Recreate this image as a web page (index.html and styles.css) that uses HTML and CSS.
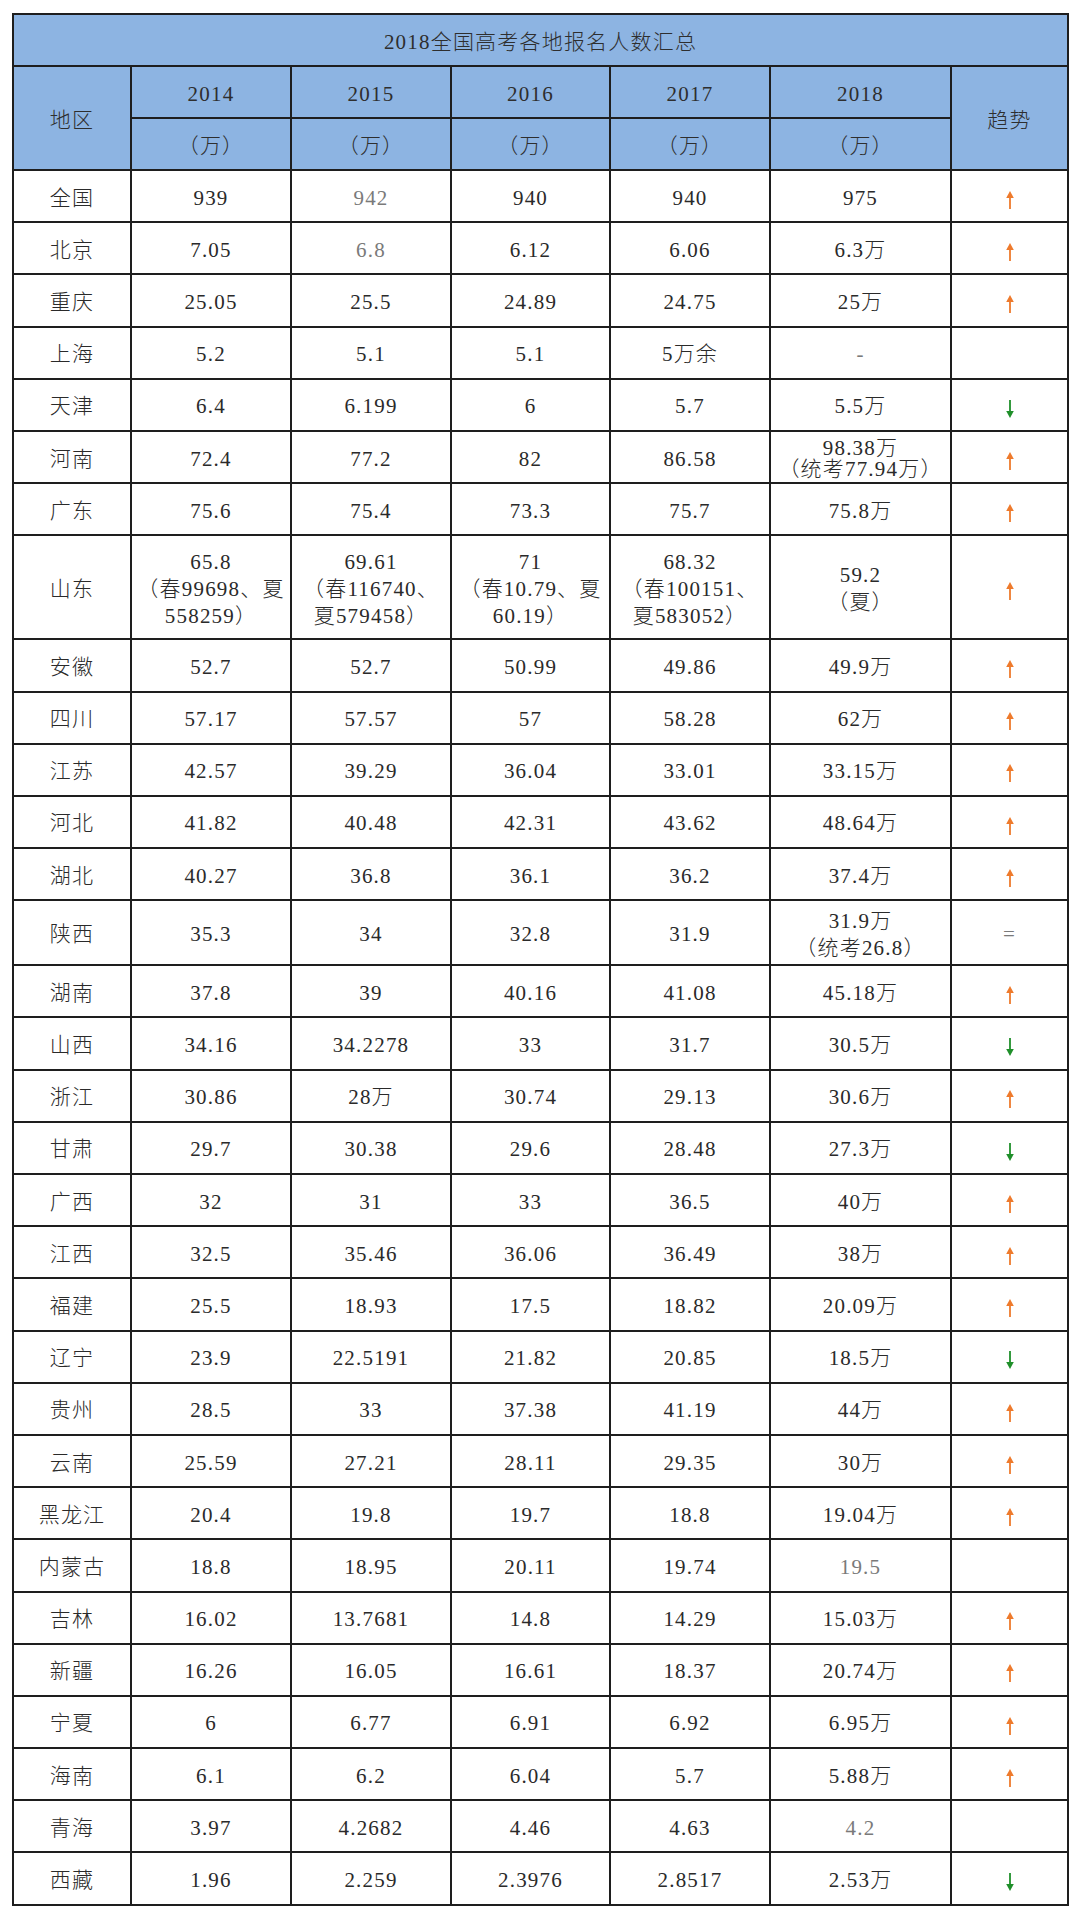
FILE: index.html
```html
<!DOCTYPE html>
<html lang="zh-CN">
<head>
<meta charset="utf-8">
<title>2018全国高考各地报名人数汇总</title>
<link rel="stylesheet" href="styles.css">
</head>
<body>
<svg class="defs" aria-hidden="true">
  <symbol id="arr-up" viewBox="0 0 8 18">
    <path d="M4 5V18" stroke="currentColor" stroke-width="1.8" fill="none"/>
    <path d="M4 0L7.8 7H0.2Z" fill="currentColor"/>
  </symbol>
  <symbol id="arr-down" viewBox="0 0 8 18">
    <path d="M4 0V13" stroke="currentColor" stroke-width="1.8" fill="none"/>
    <path d="M4 18L7.8 11H0.2Z" fill="currentColor"/>
  </symbol>
</svg>
<div class="page">
<table class="sheet">
  <colgroup>
    <col class="c-region"><col class="c-year"><col class="c-year"><col class="c-year16"><col class="c-year"><col class="c-year18"><col class="c-trend">
  </colgroup>
  <thead>
    <tr><th colspan="7">2018全国高考各地报名人数汇总</th></tr>
    <tr><th rowspan="2">地区</th><th>2014</th><th>2015</th><th>2016</th><th>2017</th><th>2018</th><th rowspan="2">趋势</th></tr>
    <tr><th>（万）</th><th>（万）</th><th>（万）</th><th>（万）</th><th>（万）</th></tr>
  </thead>
  <tbody>
    <tr><td>全国</td><td>939</td><td class="muted">942</td><td>940</td><td>940</td><td>975</td><td><svg class="arrow up"><use href="#arr-up"/></svg></td></tr>
    <tr><td>北京</td><td>7.05</td><td class="muted">6.8</td><td>6.12</td><td>6.06</td><td>6.3万</td><td><svg class="arrow up"><use href="#arr-up"/></svg></td></tr>
    <tr><td>重庆</td><td>25.05</td><td>25.5</td><td>24.89</td><td>24.75</td><td>25万</td><td><svg class="arrow up"><use href="#arr-up"/></svg></td></tr>
    <tr><td>上海</td><td>5.2</td><td>5.1</td><td>5.1</td><td>5万余</td><td class="muted">-</td><td></td></tr>
    <tr><td>天津</td><td>6.4</td><td>6.199</td><td>6</td><td>5.7</td><td>5.5万</td><td><svg class="arrow down"><use href="#arr-down"/></svg></td></tr>
    <tr><td>河南</td><td>72.4</td><td>77.2</td><td>82</td><td>86.58</td><td class="tight">98.38万<br>（统考77.94万）</td><td><svg class="arrow up"><use href="#arr-up"/></svg></td></tr>
    <tr><td>广东</td><td>75.6</td><td>75.4</td><td>73.3</td><td>75.7</td><td>75.8万</td><td><svg class="arrow up"><use href="#arr-up"/></svg></td></tr>
    <tr class="tall"><td>山东</td><td>65.8<br>（春99698、夏<br>558259）</td><td>69.61<br>（春116740、<br>夏579458）</td><td>71<br>（春10.79、夏<br>60.19）</td><td>68.32<br>（春100151、<br>夏583052）</td><td>59.2<br>（夏）</td><td><svg class="arrow up"><use href="#arr-up"/></svg></td></tr>
    <tr><td>安徽</td><td>52.7</td><td>52.7</td><td>50.99</td><td>49.86</td><td>49.9万</td><td><svg class="arrow up"><use href="#arr-up"/></svg></td></tr>
    <tr><td>四川</td><td>57.17</td><td>57.57</td><td>57</td><td>58.28</td><td>62万</td><td><svg class="arrow up"><use href="#arr-up"/></svg></td></tr>
    <tr><td>江苏</td><td>42.57</td><td>39.29</td><td>36.04</td><td>33.01</td><td>33.15万</td><td><svg class="arrow up"><use href="#arr-up"/></svg></td></tr>
    <tr><td>河北</td><td>41.82</td><td>40.48</td><td>42.31</td><td>43.62</td><td>48.64万</td><td><svg class="arrow up"><use href="#arr-up"/></svg></td></tr>
    <tr><td>湖北</td><td>40.27</td><td>36.8</td><td>36.1</td><td>36.2</td><td>37.4万</td><td><svg class="arrow up"><use href="#arr-up"/></svg></td></tr>
    <tr class="mid"><td>陕西</td><td>35.3</td><td>34</td><td>32.8</td><td>31.9</td><td>31.9万<br>（统考26.8）</td><td class="muted">=</td></tr>
    <tr><td>湖南</td><td>37.8</td><td>39</td><td>40.16</td><td>41.08</td><td>45.18万</td><td><svg class="arrow up"><use href="#arr-up"/></svg></td></tr>
    <tr><td>山西</td><td>34.16</td><td>34.2278</td><td>33</td><td>31.7</td><td>30.5万</td><td><svg class="arrow down"><use href="#arr-down"/></svg></td></tr>
    <tr><td>浙江</td><td>30.86</td><td>28万</td><td>30.74</td><td>29.13</td><td>30.6万</td><td><svg class="arrow up"><use href="#arr-up"/></svg></td></tr>
    <tr><td>甘肃</td><td>29.7</td><td>30.38</td><td>29.6</td><td>28.48</td><td>27.3万</td><td><svg class="arrow down"><use href="#arr-down"/></svg></td></tr>
    <tr><td>广西</td><td>32</td><td>31</td><td>33</td><td>36.5</td><td>40万</td><td><svg class="arrow up"><use href="#arr-up"/></svg></td></tr>
    <tr><td>江西</td><td>32.5</td><td>35.46</td><td>36.06</td><td>36.49</td><td>38万</td><td><svg class="arrow up"><use href="#arr-up"/></svg></td></tr>
    <tr><td>福建</td><td>25.5</td><td>18.93</td><td>17.5</td><td>18.82</td><td>20.09万</td><td><svg class="arrow up"><use href="#arr-up"/></svg></td></tr>
    <tr><td>辽宁</td><td>23.9</td><td>22.5191</td><td>21.82</td><td>20.85</td><td>18.5万</td><td><svg class="arrow down"><use href="#arr-down"/></svg></td></tr>
    <tr><td>贵州</td><td>28.5</td><td>33</td><td>37.38</td><td>41.19</td><td>44万</td><td><svg class="arrow up"><use href="#arr-up"/></svg></td></tr>
    <tr><td>云南</td><td>25.59</td><td>27.21</td><td>28.11</td><td>29.35</td><td>30万</td><td><svg class="arrow up"><use href="#arr-up"/></svg></td></tr>
    <tr><td>黑龙江</td><td>20.4</td><td>19.8</td><td>19.7</td><td>18.8</td><td>19.04万</td><td><svg class="arrow up"><use href="#arr-up"/></svg></td></tr>
    <tr><td>内蒙古</td><td>18.8</td><td>18.95</td><td>20.11</td><td>19.74</td><td class="muted">19.5</td><td></td></tr>
    <tr><td>吉林</td><td>16.02</td><td>13.7681</td><td>14.8</td><td>14.29</td><td>15.03万</td><td><svg class="arrow up"><use href="#arr-up"/></svg></td></tr>
    <tr><td>新疆</td><td>16.26</td><td>16.05</td><td>16.61</td><td>18.37</td><td>20.74万</td><td><svg class="arrow up"><use href="#arr-up"/></svg></td></tr>
    <tr><td>宁夏</td><td>6</td><td>6.77</td><td>6.91</td><td>6.92</td><td>6.95万</td><td><svg class="arrow up"><use href="#arr-up"/></svg></td></tr>
    <tr><td>海南</td><td>6.1</td><td>6.2</td><td>6.04</td><td>5.7</td><td>5.88万</td><td><svg class="arrow up"><use href="#arr-up"/></svg></td></tr>
    <tr><td>青海</td><td>3.97</td><td>4.2682</td><td>4.46</td><td>4.63</td><td class="muted">4.2</td><td></td></tr>
    <tr><td>西藏</td><td>1.96</td><td>2.259</td><td>2.3976</td><td>2.8517</td><td>2.53万</td><td><svg class="arrow down"><use href="#arr-down"/></svg></td></tr>
  </tbody>
</table>
</div>
</body>
</html>
```
FILE: styles.css
```css
html, body {
  margin: 0;
  padding: 0;
  background: #ffffff;
}

body {
  font-family: "Liberation Serif", "Noto Sans CJK SC", serif;
  font-size: 21px;
  color: #2a2a2a;
}

.defs {
  display: block;
  width: 0;
  height: 0;
  overflow: hidden;
}

.page {
  padding: 13px 13px 0 12px;
}

.sheet {
  border-collapse: collapse;
  table-layout: fixed;
  width: 1055px;
}

.c-region { width: 118px; }
.c-year { width: 160px; }
.c-year16 { width: 159px; }
.c-year18 { width: 181px; }
.c-trend { width: 117px; }

.sheet th,
.sheet td {
  border: 2px solid #1e1e1e;
  text-align: center;
  vertical-align: middle;
  padding: 4px 2px 0;
  font-weight: 300;
  line-height: 27px;
  letter-spacing: 1.2px;
  white-space: nowrap;
}

.sheet thead th {
  background: #8db4e2;
  color: #2e2e2e;
}

.sheet thead tr {
  height: 52px;
}

.sheet tbody tr {
  height: 52.2px;
}

.sheet tbody tr.tall {
  height: 104px;
}

.sheet tbody tr.mid {
  height: 65px;
}

.sheet td.tight {
  line-height: 21px;
}

.muted {
  color: #7a7a7a;
}

.arrow {
  display: inline-block;
  width: 8px;
  height: 18px;
  vertical-align: middle;
}

.up {
  color: #ee7a2c;
}

.down {
  color: #1f8f2a;
}
```
